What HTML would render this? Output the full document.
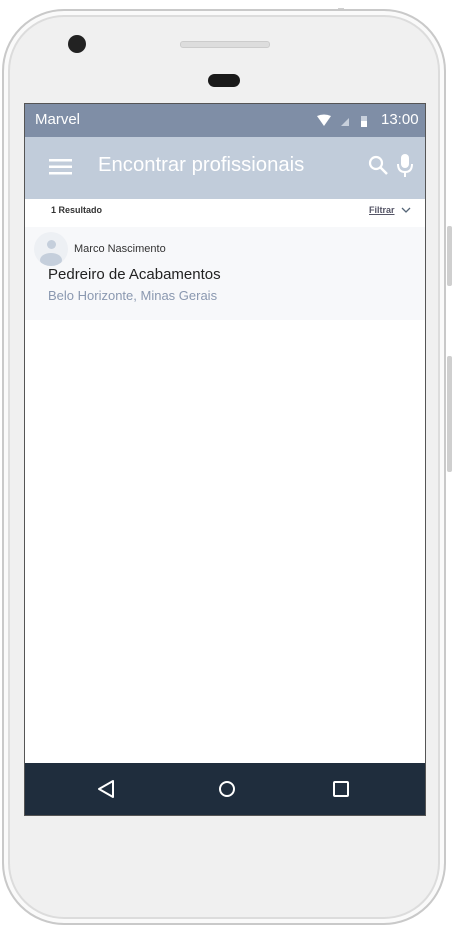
<!DOCTYPE html>
<html><head><meta charset="utf-8"><style>
body{margin:0;width:458px;height:933px;background:#fff;position:relative;overflow:hidden;font-family:"Liberation Sans",sans-serif}
.abs{position:absolute}
.phone{left:2px;top:9px;width:444px;height:916px;border-radius:62px;background:#f0f0f0;border:2px solid #c9c9c9;box-sizing:border-box;box-shadow:inset 0 0 0 4px #fafafa,inset 0 0 0 6px #dcdcdc}
.screen{left:24px;top:103px;width:402px;height:713px;background:#fff;border:1px solid #555;box-sizing:border-box;overflow:hidden}
</style></head><body>
<div class="abs" style="left:338px;top:8px;width:6px;height:8px;background:#d0d0d0"></div>
<div class="abs" style="left:447px;top:226px;width:5px;height:60px;background:#cfcfcf;border-radius:2px"></div>
<div class="abs" style="left:447px;top:356px;width:5px;height:116px;background:#cfcfcf;border-radius:2px"></div>
<div class="abs phone"></div>
<div class="abs" style="left:68px;top:35px;width:18px;height:18px;border-radius:50%;background:#222"></div>
<div class="abs" style="left:180px;top:41px;width:88px;height:5px;border-radius:3px;background:#ddd;border:1px solid #ccc"></div>
<div class="abs" style="left:208px;top:74px;width:32px;height:13px;border-radius:7px;background:#1a1a1a"></div>
<div class="abs screen">
 <div class="abs" style="left:0;top:0;width:402px;height:33px;background:#7f8ea6;color:#fff;font-size:15px">
  <span class="abs" style="left:10px;top:7px">Marvel</span>
  <svg class="abs" style="left:292px;top:10px" width="50" height="14"><path d="M0 2 Q7 -1 14 2 L7 12Z" fill="#fff"/><path d="M24 12 L32 4 L32 12Z" fill="#c8d0dc"/><rect x="44" y="2" width="6" height="11" fill="#c8d0dc"/><rect x="44" y="7" width="6" height="6" fill="#fff"/></svg>
  <span class="abs" style="left:356px;top:7px">13:00</span>
 </div>
 <div class="abs" style="left:0;top:33px;width:402px;height:62px;background:#c1ccda;color:#fff">
  <svg class="abs" style="left:24px;top:21px" width="24" height="18"><rect y="1" width="23" height="2.5" fill="#fff"/><rect y="7.5" width="23" height="2.5" fill="#fff"/><rect y="14" width="23" height="2.5" fill="#fff"/></svg>
  <span class="abs" style="left:73px;top:17px;font-size:20.3px">Encontrar profissionais</span>
  <svg class="abs" style="left:343px;top:18px" width="22" height="22"><circle cx="8" cy="8" r="6" stroke="#fff" stroke-width="2.2" fill="none"/><path d="M12.5 12.5 L19 19" stroke="#fff" stroke-width="2.5"/></svg>
  <svg class="abs" style="left:371px;top:16px" width="18" height="26"><rect x="5" y="1" width="8" height="14" rx="4" fill="#fff"/><path d="M2 11 Q2 19 9 19 Q16 19 16 11" stroke="#fff" stroke-width="2" fill="none"/><path d="M9 19 V24" stroke="#fff" stroke-width="2"/></svg>
 </div>
 <span class="abs" style="left:26px;top:101px;font-size:9px;font-weight:bold;color:#333">1 Resultado</span>
 <span class="abs" style="left:344px;top:101px;font-size:9px;font-weight:bold;color:#556;text-decoration:underline">Filtrar</span>
 <svg class="abs" style="left:376px;top:102px" width="10" height="8"><path d="M1 2 L5 6 L9 2" stroke="#567" stroke-width="1.3" fill="none"/></svg>
 <div class="abs" style="left:0;top:123px;width:402px;height:93px;background:#f7f8fa">
  <div class="abs" style="left:9px;top:5px;width:34px;height:34px;border-radius:50%;background:#edf0f4;overflow:hidden">
   <div class="abs" style="left:13px;top:8px;width:9px;height:9px;border-radius:50%;background:#c5cfdc"></div>
   <div class="abs" style="left:6px;top:21px;width:22px;height:14px;border-radius:50%;background:#c5cfdc"></div>
  </div>
  <span class="abs" style="left:49px;top:16px;font-size:11px;color:#333">Marco Nascimento</span>
  <span class="abs" style="left:23px;top:39px;font-size:15px;color:#222">Pedreiro de Acabamentos</span>
  <span class="abs" style="left:23px;top:61px;font-size:13px;color:#8a98b0">Belo Horizonte, Minas Gerais</span>
 </div>
 <div class="abs" style="left:0;top:659px;width:402px;height:54px;background:#1f2d3d">
  <svg class="abs" style="left:0;top:0" width="402" height="54"><path d="M74 26 L88 18 L88 34 Z" stroke="#fff" stroke-width="2" fill="none" stroke-linejoin="round"/><circle cx="202" cy="26" r="7" stroke="#fff" stroke-width="2" fill="none"/><rect x="309" y="19" width="14" height="14" rx="1" stroke="#fff" stroke-width="2" fill="none"/></svg>
 </div>
</div>
</body></html>
